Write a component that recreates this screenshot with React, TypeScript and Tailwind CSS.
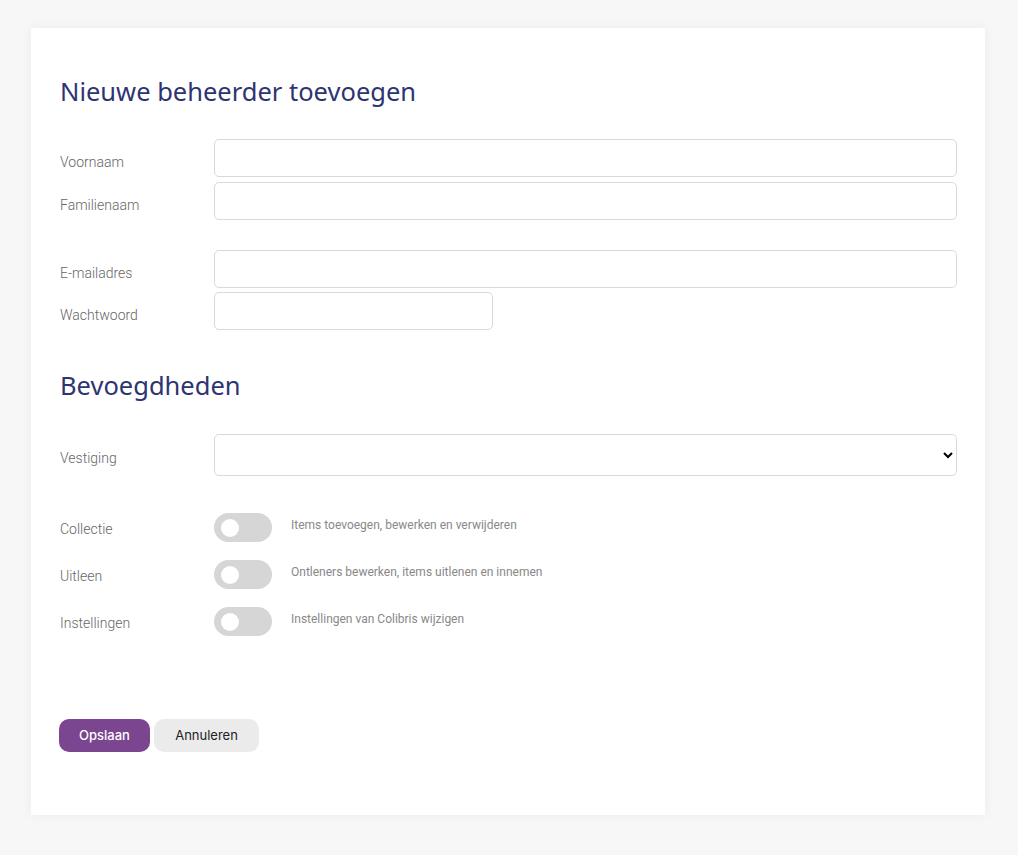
import React from "react";

const labelCls = "w-[154px] shrink-0 text-[14px] font-light text-[#666666]";
const inputCls =
  "h-[38px] rounded-[5px] border border-[#d9d9d9] bg-white px-3 text-[14px] outline-none";

function Field({ label, wide = true }: { label: string; wide?: boolean }) {
  return (
    <div className="flex items-center">
      <label className={`${labelCls} pt-[8px]`}>{label}</label>
      <input className={`${inputCls} ${wide ? "flex-1" : "w-[279px]"}`} />
    </div>
  );
}

function Toggle({ label, hint }: { label: string; hint: string }) {
  return (
    <div className="flex items-start">
      <span className={`${labelCls} pt-[6px]`}>{label}</span>
      <button
        type="button"
        aria-label={label}
        className="relative h-[29px] w-[58px] shrink-0 rounded-full bg-[#d6d6d6]"
      >
        <span className="absolute left-[7px] top-[5.5px] h-[18px] w-[18px] rounded-full bg-white" />
      </button>
      <span className="pl-[19px] pt-[3px] text-[12px] text-[#888888]">{hint}</span>
    </div>
  );
}

export default function App() {
  return (
    <div
      className="min-h-screen bg-[#f7f7f7] pt-[28px] pb-[40px]"
      style={{ fontFamily: "Roboto, 'Liberation Sans', sans-serif" }}
    >
      <div className="ml-[31px] mr-[33px] bg-white pl-[29px] pt-[45px] pb-[63px] pr-[28px] shadow-[0_0_12px_rgba(0,0,0,0.05)]">
        <h1
          className="text-[25.5px] leading-[36px] text-[#2e3470]"
          style={{ fontFamily: "'Noto Sans', 'Open Sans', sans-serif" }}
        >
          Nieuwe beheerder toevoegen
        </h1>

        <div className="mt-[30px] flex flex-col gap-[5px]">
          <Field label="Voornaam" />
          <Field label="Familienaam" />
        </div>
        <div className="mt-[30px] flex flex-col gap-[4px]">
          <Field label="E-mailadres" />
          <Field label="Wachtwoord" wide={false} />
        </div>

        <h2
          className="mt-[37px] text-[25.5px] leading-[36px] text-[#2e3470]"
          style={{ fontFamily: "'Noto Sans', 'Open Sans', sans-serif" }}
        >
          Bevoegdheden
        </h2>

        <div className="mt-[31px] flex items-center">
          <label className={`${labelCls} pt-[6px]`}>Vestiging</label>
          <select className="h-[42px] flex-1 rounded-[5px] border border-[#d9d9d9] bg-white px-2 text-[14px]">
            <option></option>
          </select>
        </div>

        <div className="mt-[37px] flex flex-col gap-[18px]">
          <Toggle label="Collectie" hint="Items toevoegen, bewerken en verwijderen" />
          <Toggle label="Uitleen" hint="Ontleners bewerken, items uitlenen en innemen" />
          <Toggle label="Instellingen" hint="Instellingen van Colibris wijzigen" />
        </div>

        <div
          className="mt-[83px] flex gap-[4px]"
          style={{ fontFamily: "Inter, 'Liberation Sans', sans-serif" }}
        >
          <button
            type="button"
            className="-ml-px h-[33px] w-[91px] rounded-[10px] bg-[#7b4590] text-[13px] font-medium text-white"
          >
            Opslaan
          </button>
          <button
            type="button"
            className="h-[33px] w-[105px] rounded-[10px] bg-[#ebebeb] text-[13px] text-[#222222]"
          >
            Annuleren
          </button>
        </div>
      </div>
    </div>
  );
}
